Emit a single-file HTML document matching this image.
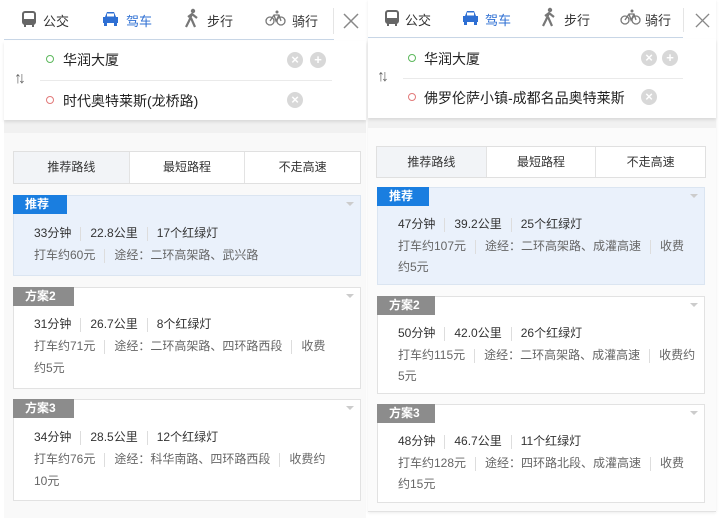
<!DOCTYPE html>
<html><head><meta charset="utf-8"><style>
*{margin:0;padding:0;box-sizing:border-box}
body{width:719px;height:518px;background:#fff;position:relative;overflow:hidden;font-family:"Liberation Sans","Noto Sans CJK SC",sans-serif;color:#333}
.a{position:absolute}
.sep{display:inline-block;width:1px;height:14px;background:#ddd;vertical-align:middle;margin:0 9px}
.bar{position:absolute;display:flex;border:1px solid #e0e0e0;background:#fff}
.bar div{flex:1;text-align:center;font-size:12px;line-height:31px;border-left:1px solid #e3e3e3;color:#333}
.bar div:first-child{border-left:none;background:#f2f4f7}
.card{position:absolute;border:1px solid #e2e2e2;background:#fff}
.card.b{background:#eaf1fb;border-color:#dbe5f1}
.badge{position:absolute;left:-1px;top:-1px;height:19px;color:#fff;font-size:12px;font-weight:bold;line-height:19px;padding-left:12px}
.l1{position:absolute;left:20px;font-size:12px;color:#333;white-space:nowrap}
.l2{position:absolute;left:20px;font-size:12px;color:#666;white-space:nowrap}
.arr{position:absolute;right:6px;top:6px;width:0;height:0;border-left:4px solid transparent;border-right:4px solid transparent;border-top:4px solid #ccc}
.tab{font-size:13px;color:#333}
.circ{position:absolute;width:8px;height:8px;border-radius:50%;border:1.5px solid}
.clr{position:absolute;width:16px;height:16px;border-radius:50%;background:#d8d8d8;color:#fff;font-size:13px;line-height:16px;text-align:center;font-weight:bold}
.inp{font-size:14px;color:#222}
.sw{position:absolute;font-size:16px;color:#666;font-weight:bold;letter-spacing:-4px}
</style></head><body>

<!-- LEFT PANEL -->
<div class="a" style="left:4px;top:0;width:362px;height:135px;background:#fff"></div>
<div class="a" style="left:4px;top:120px;width:362px;height:13px;background:#f1f1f1"></div>
<div class="a" style="left:4px;top:133px;width:362px;height:385px;background:#f9f9f9"></div>
<div class="a" style="left:4px;top:0;width:330px;height:40px;border-bottom:1px solid #c8d6e6;background:#fff"></div>
<div class="a" style="left:4px;top:41px;width:362px;height:79px;background:#fff;box-shadow:0 2px 3px rgba(0,0,0,.10)"></div>
<div class="a" style="left:333px;top:8px;width:1px;height:26px;background:#e5e5e5"></div>
<svg class="a" style="left:22px;top:11px" width="14" height="16" viewBox="0 0 14 16"><rect x="1" y="1" width="12" height="12" rx="2" fill="none" stroke="#666" stroke-width="2"/><rect x="1" y="8" width="12" height="5" fill="#666"/><rect x="2" y="13" width="2" height="3" fill="#666"/><rect x="10" y="13" width="2" height="3" fill="#666"/></svg>
<div class="a tab" style="left:43px;top:11px">公交</div>
<svg class="a" style="left:102px;top:11px" width="17" height="15" viewBox="0 0 17 15"><path d="M3 6 L5 1 H12 L14 6 H16 V12 H1 V6Z" fill="#2e6fd3"/><rect x="2" y="12" width="3" height="3" fill="#2e6fd3"/><rect x="12" y="12" width="3" height="3" fill="#2e6fd3"/><rect x="5" y="2.5" width="7" height="3" fill="#fff"/></svg>
<div class="a tab" style="left:126px;top:11px;color:#2e6fd3">驾车</div>
<svg class="a" style="left:184px;top:8px" width="16" height="20" viewBox="0 0 16 20"><circle cx="9" cy="3" r="2.2" fill="#777"/><path d="M8 6 L5 13 L2 19 M7 10 L11 19 M4 9 L8 6 L13 10" stroke="#777" stroke-width="2.2" fill="none"/></svg>
<div class="a tab" style="left:207px;top:11px">步行</div>
<svg class="a" style="left:265px;top:10px" width="21" height="16" viewBox="0 0 21 16"><circle cx="5" cy="11" r="4" fill="none" stroke="#777" stroke-width="1.3"/><circle cx="16" cy="11" r="4" fill="none" stroke="#777" stroke-width="1.3"/><path d="M5 11 L9 5 L14 5 L16 11 M9 5 L11 11 L14 5" stroke="#777" stroke-width="1.3" fill="none"/><circle cx="12" cy="2" r="1.5" fill="#777"/></svg>
<div class="a tab" style="left:292px;top:11px">骑行</div>
<svg class="a" style="left:343px;top:13px" width="16" height="16" viewBox="0 0 16 16"><path d="M1 1 L15 15 M15 1 L1 15" stroke="#888" stroke-width="1.5"/></svg>
<div class="circ" style="left:46px;top:55px;border-color:#5cb85c"></div>
<div class="a inp" style="left:63px;top:50px">华润大厦</div>
<div class="a" style="left:40px;top:80px;width:292px;height:1px;background:#eaeaea"></div>
<div class="circ" style="left:46px;top:96px;border-color:#e27a7a"></div>
<div class="a inp" style="left:63px;top:91px">时代奥特莱斯(龙桥路)</div>
<div class="sw" style="left:14px;top:70px">↑↓</div>
<div class="clr" style="left:287px;top:52px">×</div>
<div class="clr" style="left:310px;top:52px">+</div>
<div class="clr" style="left:287px;top:92px">×</div>

<div class="bar" style="left:13px;top:151px;width:348px;height:33px"><div>推荐路线</div><div>最短路程</div><div>不走高速</div></div>

<div class="card b" style="left:13px;top:195px;width:348px;height:81px"><div class="badge" style="width:54px;background:#1a7ee0">推荐</div><div class="arr"></div>
<div class="l1" style="top:28px">33分钟<span class="sep"></span>22.8公里<span class="sep"></span>17个红绿灯</div>
<div class="l2" style="top:50px">打车约60元<span class="sep"></span>途经：二环高架路、武兴路</div></div>

<div class="card" style="left:13px;top:287px;width:348px;height:102px"><div class="badge" style="width:61px;background:#8c8c8c">方案2</div><div class="arr"></div>
<div class="l1" style="top:27px">31分钟<span class="sep"></span>26.7公里<span class="sep"></span>8个红绿灯</div>
<div class="l2" style="top:49px">打车约71元<span class="sep"></span>途经：二环高架路、四环路西段<span class="sep"></span>收费</div>
<div class="l2" style="top:71px">约5元</div></div>

<div class="card" style="left:13px;top:399px;width:348px;height:102px"><div class="badge" style="width:61px;background:#8c8c8c">方案3</div><div class="arr"></div>
<div class="l1" style="top:28px">34分钟<span class="sep"></span>28.5公里<span class="sep"></span>12个红绿灯</div>
<div class="l2" style="top:50px">打车约76元<span class="sep"></span>途经：科华南路、四环路西段<span class="sep"></span>收费约</div>
<div class="l2" style="top:72px">10元</div></div>

<!-- RIGHT PANEL -->
<div class="a" style="left:368px;top:0;width:348px;height:512px;background:#fbfbfb;border-bottom:1px solid #e2e2e2;box-shadow:0 1px 3px rgba(0,0,0,.08)"></div>
<div class="a" style="left:368px;top:0;width:348px;height:118px;background:#fff"></div>
<div class="a" style="left:368px;top:118px;width:348px;height:10px;background:#f1f1f1"></div>
<div class="a" style="left:368px;top:0;width:315px;height:38px;border-bottom:1px solid #c8d6e6;background:#fff"></div>
<div class="a" style="left:368px;top:39px;width:348px;height:79px;background:#fff;box-shadow:0 2px 3px rgba(0,0,0,.10)"></div>
<div class="a" style="left:683px;top:8px;width:1px;height:24px;background:#e5e5e5"></div>
<svg class="a" style="left:385px;top:10px" width="14" height="16" viewBox="0 0 14 16"><rect x="1" y="1" width="12" height="12" rx="2" fill="none" stroke="#666" stroke-width="2"/><rect x="1" y="8" width="12" height="5" fill="#666"/><rect x="2" y="13" width="2" height="3" fill="#666"/><rect x="10" y="13" width="2" height="3" fill="#666"/></svg>
<div class="a tab" style="left:405px;top:10px">公交</div>
<svg class="a" style="left:462px;top:10px" width="17" height="15" viewBox="0 0 17 15"><path d="M3 6 L5 1 H12 L14 6 H16 V12 H1 V6Z" fill="#2e6fd3"/><rect x="2" y="12" width="3" height="3" fill="#2e6fd3"/><rect x="12" y="12" width="3" height="3" fill="#2e6fd3"/><rect x="5" y="2.5" width="7" height="3" fill="#fff"/></svg>
<div class="a tab" style="left:485px;top:10px;color:#2e6fd3">驾车</div>
<svg class="a" style="left:541px;top:7px" width="16" height="20" viewBox="0 0 16 20"><circle cx="9" cy="3" r="2.2" fill="#777"/><path d="M8 6 L5 13 L2 19 M7 10 L11 19 M4 9 L8 6 L13 10" stroke="#777" stroke-width="2.2" fill="none"/></svg>
<div class="a tab" style="left:564px;top:10px">步行</div>
<svg class="a" style="left:620px;top:9px" width="21" height="16" viewBox="0 0 21 16"><circle cx="5" cy="11" r="4" fill="none" stroke="#777" stroke-width="1.3"/><circle cx="16" cy="11" r="4" fill="none" stroke="#777" stroke-width="1.3"/><path d="M5 11 L9 5 L14 5 L16 11 M9 5 L11 11 L14 5" stroke="#777" stroke-width="1.3" fill="none"/><circle cx="12" cy="2" r="1.5" fill="#777"/></svg>
<div class="a tab" style="left:645px;top:10px">骑行</div>
<svg class="a" style="left:695px;top:13px" width="15" height="15" viewBox="0 0 16 16"><path d="M1 1 L15 15 M15 1 L1 15" stroke="#888" stroke-width="1.5"/></svg>
<div class="circ" style="left:408px;top:54px;border-color:#5cb85c"></div>
<div class="a inp" style="left:424px;top:49px">华润大厦</div>
<div class="a" style="left:403px;top:78px;width:280px;height:1px;background:#eaeaea"></div>
<div class="circ" style="left:408px;top:93px;border-color:#e27a7a"></div>
<div class="a inp" style="left:424px;top:88px">佛罗伦萨小镇-成都名品奥特莱斯</div>
<div class="sw" style="left:377px;top:68px">↑↓</div>
<div class="clr" style="left:641px;top:50px">×</div>
<div class="clr" style="left:662px;top:50px">+</div>
<div class="clr" style="left:641px;top:89px">×</div>

<div class="bar" style="left:376px;top:146px;width:330px;height:32px"><div>推荐路线</div><div>最短路程</div><div>不走高速</div></div>

<div class="card b" style="left:377px;top:187px;width:328px;height:98px"><div class="badge" style="width:52px;background:#1a7ee0">推荐</div><div class="arr"></div>
<div class="l1" style="top:27px">47分钟<span class="sep"></span>39.2公里<span class="sep"></span>25个红绿灯</div>
<div class="l2" style="top:49px">打车约107元<span class="sep"></span>途经：二环高架路、成灌高速<span class="sep"></span>收费</div>
<div class="l2" style="top:70px">约5元</div></div>

<div class="card" style="left:377px;top:296px;width:328px;height:98px"><div class="badge" style="width:58px;background:#8c8c8c">方案2</div><div class="arr"></div>
<div class="l1" style="top:27px">50分钟<span class="sep"></span>42.0公里<span class="sep"></span>26个红绿灯</div>
<div class="l2" style="top:49px">打车约115元<span class="sep"></span>途经：二环高架路、成灌高速<span class="sep"></span>收费约</div>
<div class="l2" style="top:70px">5元</div></div>

<div class="card" style="left:377px;top:404px;width:328px;height:99px"><div class="badge" style="width:58px;background:#8c8c8c">方案3</div><div class="arr"></div>
<div class="l1" style="top:27px">48分钟<span class="sep"></span>46.7公里<span class="sep"></span>11个红绿灯</div>
<div class="l2" style="top:49px">打车约128元<span class="sep"></span>途经：四环路北段、成灌高速<span class="sep"></span>收费</div>
<div class="l2" style="top:70px">约15元</div></div>

</body></html>
